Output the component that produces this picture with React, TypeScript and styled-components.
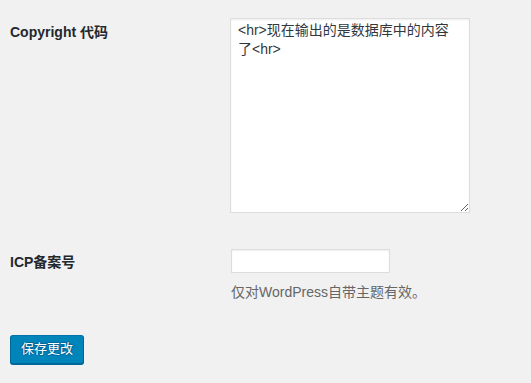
import React from "react";
import styled, { createGlobalStyle } from "styled-components";

const Global = createGlobalStyle`
  html, body { margin: 0; padding: 0; background: #f1f1f1; }
  body {
    font-family: "Liberation Sans", "Noto Sans CJK SC", sans-serif;
    color: #23282d;
    font-size: 13px;
  }
`;

const Page = styled.form`
  padding: 3px 10px 0 10px;
  width: 531px;
  height: 383px;
  box-sizing: border-box;
`;

const Row = styled.div<{ $pad: number; $labelPad: number }>`
  display: grid;
  grid-template-columns: 220px 1fr;
  align-items: start;
  padding-bottom: 15px;
  & > label { padding-top: ${(p) => p.$labelPad}px; }
  & > div { padding-top: ${(p) => p.$pad}px; }
`;

const Label = styled.label`
  font-weight: 700;
  font-size: 14px;
  line-height: 18px;
  color: #23282d;
`;

const Field = styled.div`
  display: flex;
  flex-direction: column;
  align-items: flex-start;
`;

const TextArea = styled.textarea`
  display: block;
  box-sizing: border-box;
  width: 240px;
  height: 195px;
  margin: 0;
  padding: 2px 7px;
  border: 1px solid #ddd;
  box-shadow: inset 0 1px 2px rgba(0, 0, 0, 0.07);
  background: #fff;
  color: #32373c;
  font-family: "Liberation Sans", "Noto Sans CJK SC", sans-serif;
  font-size: 14px;
  line-height: 19px;
  outline: none;
`;

const Input = styled.input`
  display: block;
  box-sizing: border-box;
  width: 159px;
  height: 24px;
  margin: 0 0 0 1px;
  padding: 3px 5px;
  border: 1px solid #ddd;
  box-shadow: inset 0 1px 2px rgba(0, 0, 0, 0.07);
  background: #fff;
  color: #32373c;
  font-family: "Liberation Sans", "Noto Sans CJK SC", sans-serif;
  font-size: 14px;
  outline: none;
`;

const Description = styled.p`
  margin: 10px 0 0 1px;
  color: #666;
  font-size: 14px;
  line-height: 19px;
`;

const Submit = styled.div`
  padding-top: 18px;
`;

const PrimaryButton = styled.button`
  box-sizing: border-box;
  height: 29px;
  padding: 0 10px 1px;
  border: 1px solid;
  border-color: #0073aa #006799 #006799;
  border-radius: 3px;
  background: #0085ba;
  box-shadow: 0 1px 0 #006799;
  color: #fff;
  text-shadow: 0 -1px 1px #006799, 1px 0 1px #006799, 0 1px 1px #006799, -1px 0 1px #006799;
  font-family: "Liberation Sans", "Noto Sans CJK SC", sans-serif;
  font-size: 13px;
  line-height: 26px;
  cursor: pointer;
`;

export default function App() {
  return (
    <>
      <Global />
      <Page onSubmit={(e) => e.preventDefault()}>
        <Row $pad={15} $labelPad={20}>
          <Label htmlFor="copyright">Copyright 代码</Label>
          <Field>
            <TextArea id="copyright" defaultValue="<hr>现在输出的是数据库中的内容了<hr>" />
          </Field>
        </Row>
        <Row $pad={21} $labelPad={25}>
          <Label htmlFor="icp">ICP备案号</Label>
          <Field>
            <Input id="icp" type="text" />
            <Description>仅对WordPress自带主题有效。</Description>
          </Field>
        </Row>
        <Submit>
          <PrimaryButton type="submit">保存更改</PrimaryButton>
        </Submit>
      </Page>
    </>
  );
}
